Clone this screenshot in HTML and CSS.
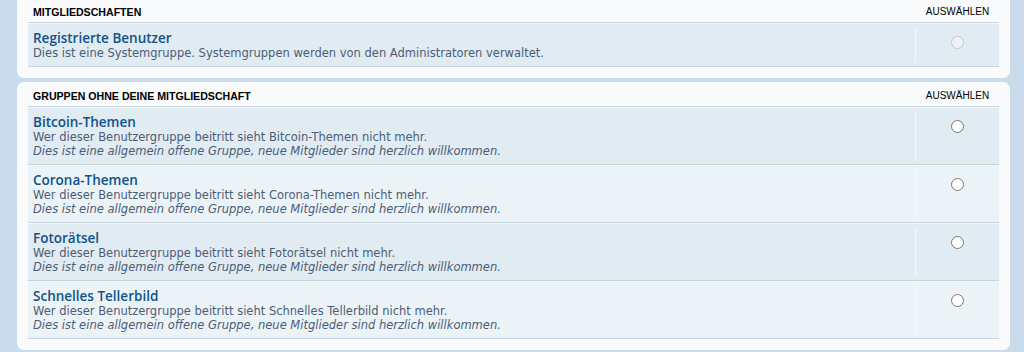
FILE: index.html
```html
<!DOCTYPE html>
<html lang="de">
<head>
  <meta charset="UTF-8" />
  <meta name="viewport" content="width=device-width, initial-scale=1" />
  <title>Benutzergruppen</title>
  <link rel="stylesheet" href="styles.css">
</head>
<body>
  <main class="content">

    <div class="panel panel-top">
      <ul class="topiclist">
        <li class="header">
          <span class="col-name">Mitgliedschaften</span>
          <span class="col-mark">Auswählen</span>
        </li>
      </ul>
      <ul class="topiclist rows">
        <li class="row bg2">
          <div class="col-name">
            <a class="title" href="#">Registrierte Benutzer</a>
            <div class="desc">Dies ist eine Systemgruppe. Systemgruppen werden von den Administratoren verwaltet.</div>
          </div>
          <div class="col-mark"><input type="radio" name="selected" disabled /></div>
        </li>
      </ul>
    </div>

    <div class="panel">
      <ul class="topiclist">
        <li class="header">
          <span class="col-name">Gruppen ohne deine Mitgliedschaft</span>
          <span class="col-mark">Auswählen</span>
        </li>
      </ul>
      <ul class="topiclist rows">
        <li class="row bg2">
          <div class="col-name">
            <a class="title" href="#">Bitcoin-Themen</a>
            <div class="desc">Wer dieser Benutzergruppe beitritt sieht Bitcoin-Themen nicht mehr.</div>
            <div class="desc note">Dies ist eine allgemein offene Gruppe, neue Mitglieder sind herzlich willkommen.</div>
          </div>
          <div class="col-mark"><input type="radio" name="selected" /></div>
        </li>
        <li class="row bg1">
          <div class="col-name">
            <a class="title" href="#">Corona-Themen</a>
            <div class="desc">Wer dieser Benutzergruppe beitritt sieht Corona-Themen nicht mehr.</div>
            <div class="desc note">Dies ist eine allgemein offene Gruppe, neue Mitglieder sind herzlich willkommen.</div>
          </div>
          <div class="col-mark"><input type="radio" name="selected" /></div>
        </li>
        <li class="row bg2">
          <div class="col-name">
            <a class="title" href="#">Fotorätsel</a>
            <div class="desc">Wer dieser Benutzergruppe beitritt sieht Fotorätsel nicht mehr.</div>
            <div class="desc note">Dies ist eine allgemein offene Gruppe, neue Mitglieder sind herzlich willkommen.</div>
          </div>
          <div class="col-mark"><input type="radio" name="selected" /></div>
        </li>
        <li class="row bg1">
          <div class="col-name">
            <a class="title" href="#">Schnelles Tellerbild</a>
            <div class="desc">Wer dieser Benutzergruppe beitritt sieht Schnelles Tellerbild nicht mehr.</div>
            <div class="desc note">Dies ist eine allgemein offene Gruppe, neue Mitglieder sind herzlich willkommen.</div>
          </div>
          <div class="col-mark"><input type="radio" name="selected" /></div>
        </li>
      </ul>
    </div>

  </main>
</body>
</html>
```

FILE: styles.css
```css
body {
  margin: 0;
  padding: 0;
  background: #cadceb;
  font-family: "DejaVu Sans", Verdana, sans-serif;
  color: #4c5d77;
}
.content {
  padding: 0 14px 0 17px;
  margin-top: -10px;
}

/* panels */
.panel {
  background: #f8fafb;
  border-radius: 7px;
  padding: 0 11px 11px;
  margin-bottom: 4px;
}

ul.topiclist {
  list-style: none;
  margin: 0;
  padding: 0;
}
ul.topiclist li {
  display: flex;
}
.col-name {
  flex: 1;
  padding-left: 5px;
}
.col-mark {
  width: 83px;
  text-align: center;
}

/* header line */
li.header {
  padding: 16px 0 4px;
  font-family: "Liberation Sans", Arial, sans-serif;
  font-size: 10px;
  line-height: 12px;
  text-transform: uppercase;
  color: #000;
  border-bottom: 1px solid #c9d6e0;
}
.panel:not(.panel-top) li.header {
  padding-top: 8px;
}
li.header .col-name {
  font-weight: bold;
  font-size: 10.6px;
}

/* rows */
li.row {
  border-top: 1px solid #f3f7f9;
  border-bottom: 1px solid #c6d4de;
}
.bg1 { background: #ecf3f7; }
.bg2 { background: #e1ebf2; }

li.row .col-name {
  padding-top: 6px;
  padding-bottom: 6px;
}
li.row .col-mark {
  border-left: 1px solid #f4f7f9;
  margin: 3px 0;
  padding-top: 7px;
}
.title {
  display: block;
  font-family: "Open Sans", "DejaVu Sans", sans-serif;
  font-weight: 600;
  font-size: 13.5px;
  line-height: 16px;
  color: #105289;
  text-decoration: none;
}
.desc {
  font-size: 11.5px;
  line-height: 14px;
}
.note {
  font-style: italic;
}

input[type="radio"] {
  margin: 0;
  width: 13px;
  height: 13px;
}
```
